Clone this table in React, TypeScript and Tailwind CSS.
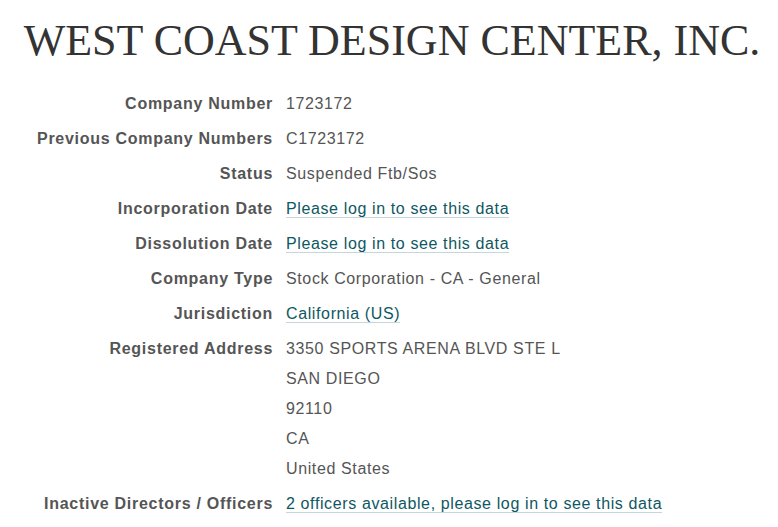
const rows: { label: string; value: string | string[]; link?: boolean }[] = [
    { label: 'Company Number', value: '1723172' },
    { label: 'Previous Company Numbers', value: 'C1723172' },
    { label: 'Status', value: 'Suspended Ftb/Sos' },
    { label: 'Incorporation Date', value: 'Please log in to see this data', link: true },
    { label: 'Dissolution Date', value: 'Please log in to see this data', link: true },
    { label: 'Company Type', value: 'Stock Corporation - CA - General' },
    { label: 'Jurisdiction', value: 'California (US)', link: true },
    {
        label: 'Registered Address',
        value: ['3350 SPORTS ARENA BLVD STE L', 'SAN DIEGO', '92110', 'CA', 'United States'],
    },
    { label: 'Inactive Directors / Officers', value: '2 officers available, please log in to see this data', link: true },
];

export default function App() {
    return (
        <div className="w-[778px] h-[527px] overflow-hidden bg-white">
            <h1 className="pt-[11px] pl-[6px] text-center whitespace-nowrap text-[44px] leading-[60px] text-[#333333] font-['Liberation_Serif',serif]">
                WEST COAST DESIGN CENTER, INC.
            </h1>
            <dl className="mt-[18px] grid grid-cols-[273px_1fr] gap-x-[13px] text-[16px] leading-[30px] font-['Liberation_Sans',Arial,sans-serif] text-[#555555]">
                {rows.map((row) => (
                    <div key={row.label} className="contents">
                        <dt className="text-right font-bold tracking-[0.72px] mb-[5px]">{row.label}</dt>
                        <dd className="mb-[5px] tracking-[0.62px]">
                            {Array.isArray(row.value) ? (
                                row.value.map((line) => <div key={line}>{line}</div>)
                            ) : row.link ? (
                                <a href="#" className="text-[#0e5763] border-b border-[#c7d5dc]">
                                    {row.value}
                                </a>
                            ) : (
                                row.value
                            )}
                        </dd>
                    </div>
                ))}
            </dl>
        </div>
    );
}
